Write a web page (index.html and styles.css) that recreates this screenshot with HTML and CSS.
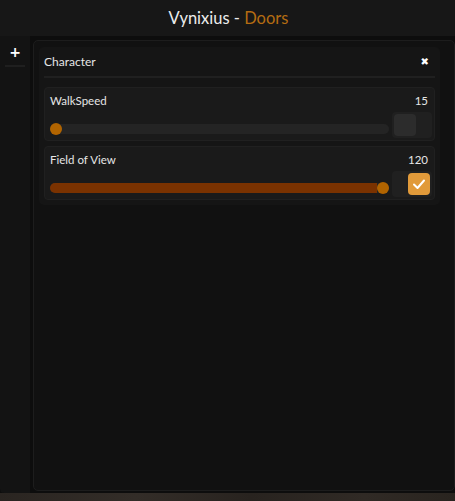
FILE: index.html
```html
<!DOCTYPE html>
<html lang="en">
<head>
  <meta charset="UTF-8" />
  <title>Vynixius - Doors</title>
  <link rel="stylesheet" href="styles.css">
</head>
<body>
  <div class="window">
    <header class="titlebar">
      <span class="title">Vynixius - <span class="accent">Doors</span></span>
    </header>

    <div class="body">
      <aside class="sidebar">
        <button class="add-tab">+</button>
        <div class="sidebar-line"></div>
      </aside>

      <main class="page">
        <section class="section">
          <div class="section-head">
            <span>Character</span>
            <span class="close">&#x2716;</span>
          </div>

          <div class="item">
            <div class="item-top">
              <span>WalkSpeed</span>
              <span class="value">15</span>
            </div>
            <div class="item-bottom">
              <div class="track">
                <div class="fill" style="width: 0%"></div>
                <div class="knob"></div>
              </div>
              <div class="toggle">
                <div class="box"></div>
              </div>
            </div>
          </div>

          <div class="item">
            <div class="item-top">
              <span>Field of View</span>
              <span class="value">120</span>
            </div>
            <div class="item-bottom">
              <div class="track">
                <div class="fill full"></div>
                <div class="knob"></div>
              </div>
              <div class="toggle on">
                <div class="box">
                  <svg width="14" height="14" viewBox="0 0 14 14"><path d="M2 7.5 L5.5 11 L12 3.5" fill="none" stroke="#fff" stroke-width="2" stroke-linecap="round" stroke-linejoin="round"/></svg>
                </div>
              </div>
            </div>
          </div>
        </section>
      </main>
    </div>

    <div class="ground"></div>
  </div>
</body>
</html>
```

FILE: styles.css
```css
:root {
  --bg: #101010;
  --bar: #171717;
  --section: #151515;
  --card: #1a1a1a;
  --line: #222;
  --text: #e6e6e6;
  --orange: #b16400;
  --orange-dark: #7a3200;
  --check: #e19a3a;
}

* {
  margin: 0;
  padding: 0;
  box-sizing: border-box;
}

body {
  background: var(--bg);
  color: var(--text);
  font-family: 'Lato', 'Open Sans', sans-serif;
  width: 455px;
  height: 501px;
  overflow: hidden;
}

.window {
  display: flex;
  flex-direction: column;
  height: 100%;
}

.titlebar {
  height: 36px;
  background: var(--bar);
  display: flex;
  align-items: center;
  justify-content: center;
  flex-shrink: 0;
}

.title {
  font-size: 16.5px;
  color: #ececec;
  margin-left: 2px;
}

.title .accent {
  color: #b46c12;
}

.body {
  flex: 1;
  display: flex;
  gap: 3px;
  background: #0d0d0d;
}

.sidebar {
  width: 30px;
  background: #131313;
  border-bottom-left-radius: 4px;
  display: flex;
  flex-direction: column;
  align-items: center;
  padding-top: 7px;
}

.add-tab {
  background: none;
  border: none;
  color: #fff;
  font-family: 'DejaVu Sans', sans-serif;
  font-weight: bold;
  font-size: 14px;
  line-height: 16px;
  width: 20px;
  height: 18px;
}

.sidebar-line {
  width: 20px;
  height: 2px;
  background: #1f1f1f;
  margin-top: 4px;
}

.page {
  flex: 1;
  margin-top: 4px;
  margin-bottom: 2px;
  background: #111;
  border: 1px solid #1d1d1d;
  border-radius: 5px;
  padding: 6px 14px 0 5px;
}

.section {
  background: var(--section);
  border-radius: 5px;
  padding: 0 5px 5px 5px;
  display: flex;
  flex-direction: column;
  gap: 5px;
}

.section-head {
  display: flex;
  justify-content: space-between;
  align-items: center;
  height: 31px;
  font-size: 12px;
  padding: 0 6px 0 0;
  border-bottom: 2px solid #202020;
  margin-bottom: 4px;
}

.close {
  font-family: 'DejaVu Sans', sans-serif;
  font-size: 10px;
  color: #fff;
}

.item {
  background: var(--card);
  border: 1px solid #202020;
  border-radius: 4px;
  padding: 6px 2px 2px 5px;
}

.item-top {
  display: flex;
  justify-content: space-between;
  font-size: 11.5px;
  height: 18px;
  line-height: 14px;
  padding-right: 4px;
}

.item-bottom {
  display: flex;
  align-items: flex-end;
  gap: 3px;
}

.track {
  flex: 1;
  height: 10px;
  background: #242424;
  border-radius: 5px;
  display: flex;
  margin-bottom: 4px;
}

.fill {
  height: 100%;
  background: var(--orange-dark);
  border-radius: 5px 0 0 5px;
}

.fill.full {
  flex: 1;
}

.knob {
  width: 12px;
  height: 12px;
  margin-top: -1px;
  border-radius: 50%;
  background: var(--orange);
  flex-shrink: 0;
}

.toggle {
  width: 40px;
  height: 26px;
  background: #202020;
  border-radius: 4px;
  padding: 2px;
  display: flex;
}

.toggle.on {
  justify-content: flex-end;
}

.box {
  width: 22px;
  height: 22px;
  border-radius: 4px;
  background: #2c2c2c;
  display: flex;
  align-items: center;
  justify-content: center;
}

.toggle.on .box {
  background: var(--check);
}

.ground {
  height: 8px;
  flex-shrink: 0;
  background: linear-gradient(100deg, #2a2521 0%, #332d28 30%, #28231f 55%, #302a25 80%, #29241f 100%);
}
```
